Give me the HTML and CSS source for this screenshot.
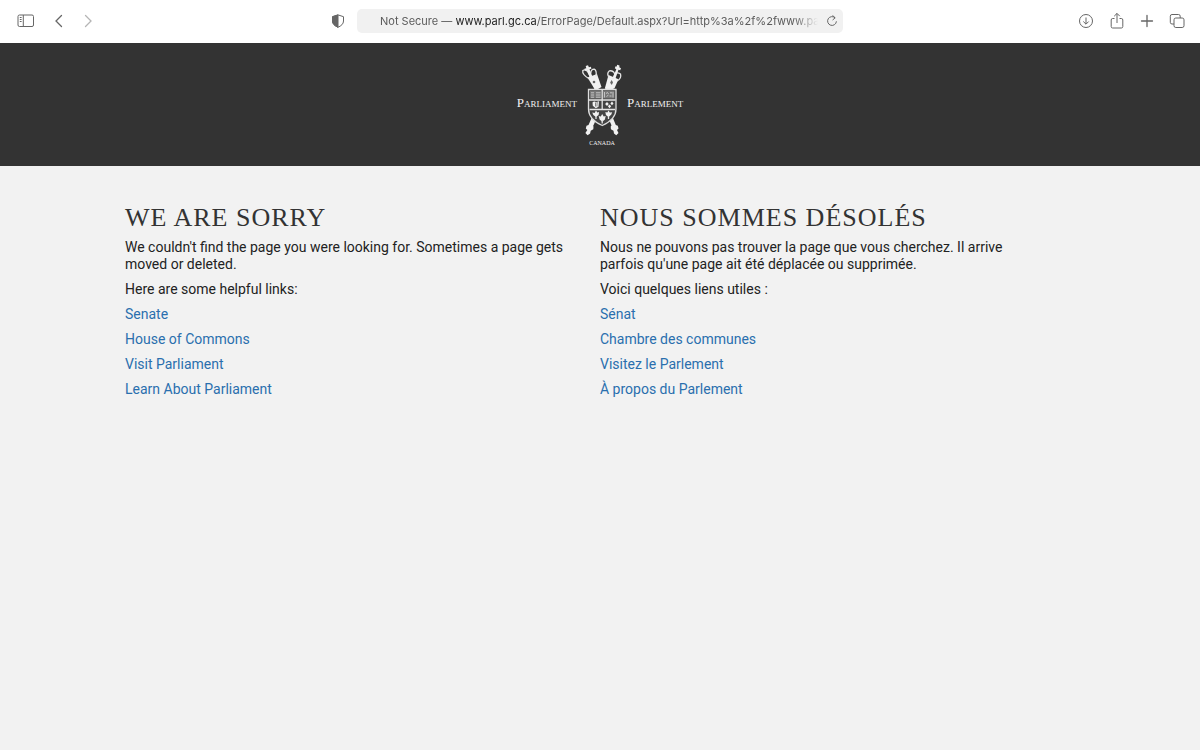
FILE: index.html
```html
<!DOCTYPE html>
<html lang="en">
<head>
    <meta charset="UTF-8">
    <meta name="viewport" content="width=device-width, initial-scale=1.0">
    <title>Parliament of Canada - Parlement du Canada</title>
    <link rel="stylesheet" href="styles.css">
</head>
<body>

    <div class="toolbar">
        <div class="tools tools-left">
            <button type="button" aria-label="Show sidebar">
                <svg width="18" height="14" viewBox="0 0 18 14">
                    <rect x="1" y="1" width="15.5" height="11.5" rx="1.5"/>
                    <path d="M6.3 1v11.5M2.8 3.5h1.8M2.8 5.5h1.8M2.8 7.5h1.8"/>
                </svg>
            </button>
            <button type="button" aria-label="Back">
                <svg width="10" height="14" viewBox="0 0 10 14"><path class="thick" d="M7.5 1.5 2 7l5.5 5.5"/></svg>
            </button>
            <button type="button" aria-label="Forward" disabled>
                <svg width="10" height="14" viewBox="0 0 10 14"><path class="thick" d="M2.5 1.5 8 7l-5.5 5.5"/></svg>
            </button>
        </div>

        <div class="center">
            <button type="button" aria-label="Privacy report">
                <svg width="14" height="14" viewBox="0 0 14 14">
                    <path d="M7 .9 12.5 2.7V7c0 3-2.3 4.800-5.500 6.300C3.800 11.800 1.500 10 1.500 7V2.700z"/>
                    <path class="solid" d="M7 .9v12.400C3.800 11.800 1.500 10 1.500 7V2.700z"/>
                </svg>
            </button>
            <div class="address">
                <div class="url">
                    <label for="url">Not Secure — <b>www.parl.gc.ca</b></label>
                    <input type="text" id="url" value="/ErrorPage/Default.aspx?Url=http%3a%2f%2fwww.parl.gc.ca%2f">
                </div>
                <button type="button" aria-label="Reload">
                    <svg width="12" height="12" viewBox="0 0 12 12"><path d="M9 2.8A4.4 4.4 0 1 0 10.4 6.3M6.5.4 9.2 2.8 6.6 5"/></svg>
                </button>
            </div>
        </div>

        <div class="tools tools-right">
            <button type="button" aria-label="Downloads">
                <svg width="16" height="16" viewBox="0 0 16 16"><circle cx="8" cy="8" r="6.5"/><path d="M8 4.5v6.500M5.3 8.5 8 11.2l2.7-2.7"/></svg>
            </button>
            <button type="button" aria-label="Share">
                <svg width="16" height="18" viewBox="0 0 16 18"><path d="M5.5 6.5H3.6Q2.2 6.5 2.2 8v6.5Q2.2 16 3.6 16h8.8q1.4 0 1.4-1.5V8q0-1.5-1.4-1.5h-1.9M8 11V1.5M5.2 4.2 8 1.4l2.8 2.8"/></svg>
            </button>
            <button type="button" aria-label="New tab">
                <svg width="14" height="14" viewBox="0 0 14 14"><path class="thick" d="M7 1.5v11M1.5 7h11"/></svg>
            </button>
            <button type="button" aria-label="Show all tabs">
                <svg width="16" height="16" viewBox="0 0 16 16"><rect x="5" y="5" width="10" height="9.5" rx="1.8"/><path d="M5 11H3Q1.3 11 1.3 9.3V3.2Q1.3 1.5 3 1.5h6.5q1.7 0 1.7 1.7V5"/></svg>
            </button>
        </div>
    </div>

    <header>
        <div class="logo">
            <span class="word">Parliament</span>
            <div class="emblem">
                <svg width="44" height="74" viewBox="0 0 44 74">
                    <!-- maces crossed behind the shield -->
                    <path class="staff" d="M14 20 35 65M31 20 10 65"/>
                    <path class="fill" d="m7.500 13.500 9.500-3.500 4.500 13-6 3.500z"/>
                    <path class="line" d="M9.500 15Q1.800 10.500 2.800 6.500q3-1.800 5.200 1.700L10.500 13M16 12.500q1-6-1.800-7.300-3.400 0-3.400 4.300"/>
                    <path class="fill" d="M5.700 2 8 1.300l.9 1.900 2-.5.5 2-1.900.6 2.900 7.200-2.600 1L7 6.200l-2 .5-.6-1.900 1.900-.6z"/>
                    <circle class="hole" cx="14" cy="18" r="1.300"/>
                    <path class="fill" d="m28.500 11 10 4.300-4 9-5.200 2.500-4.500-2.300z"/>
                    <path class="line" d="M29.500 14q-3.500-4.200 0-7.200 4.200-.4 5.200 3.300M37 17q4.800-2.500 3.500-7-3.200-2.300-5.700 0L33 15"/>
                    <path class="fill" d="m37 .7 2.500.9-.2 1.700 1.700 1-.8 1.900-1.700-.4L35.300 15l-2.600-1L36.300 5.200l-1.500-1 .8-1.900 1.300.3z"/>
                    <path class="hole" d="m31.500 16 1.500 2.200-1.200 2.800-1.700-2.200z"/>
                    <path class="fill" d="m30 55 2.800-1.200 3 7.200 2 .8.7 2.800-1.500 1.500 1.500 2.800-2.200 2.300-2.300-1.800-.5-2.600-2.600-1.600-.2-2.700 1.200-1.500z"/>
                    <path class="fill" d="m14.500 55-2.800-1.200-3.200 7.200-2 .8-.7 2.800 1.500 1.500-1.900 2.800 2.200 2.300 2.500-1.800.6-2.600 2.600-1.600.2-2.700-1.200-1.500z"/>
                    <!-- shield -->
                    <path class="shield" d="M8.500 25.500h27.500V45c0 8-6 13-13.700 16.500C14.500 58 8.500 53 8.500 45z"/>
                    <path class="quarter" d="M10 27h11.500v7.500H10zM23 27h11.500v7.500H23z"/>
                    <path class="detail" d="M11 28.800h3M16 28.800h4.500M11 31h3M16 31h4.500M11 33.200h3M16 33.200h4.500M24.500 28v5.500M33 28v5.500M26 29.500l1.500-1 1 1.500M29.500 32h2M26.500 32.500l2-1.500M30 28.800h2"/>
                    <path class="line" d="M9 36h26.500M22.200 26v19M9.500 45.500h25.500"/>
                    <path class="fill" d="M12.500 38.500q2-2 3.500-.2l3-1-.5 5.500-2.700 1.500-3-2.500z"/>
                    <path class="hole-line" d="M15.500 38.500v4M17.200 38l-.3 4.500"/>
                    <path class="fill" d="m27 38 1.800 2L27 42l-1.900-2zM32 37.500l1.500 2-1.500 1.700-1.600-1.700zM29.500 40.500l1.700 1.700-1.700 2-1.600-2z"/>
                    <path class="fill" d="m16 46.500 1.300 2.100 1.800-.7-.5 3.200-2.600 2-2.700-2-1-2.500 2.300.3zM28.500 46.500l1.300 2.100 2.400-.3-1 2.500-2.700 2.300-2.600-2-.5-3.200 1.900.7zM22.200 50l1.500 2.500 2-.5-.8 3.400-2.700 2.300-2.600-2.300-.9-3.400 2.100.5z"/>
                    <path class="line" d="M22.200 56v3.500M16 52v3M28.500 52v3"/>
                </svg>
                <span class="country">CANADA</span>
            </div>
            <span class="word">Parlement</span>
        </div>
    </header>

    <main class="container">
        <section lang="en">
            <h1>WE ARE SORRY</h1>
            <p>We couldn't find the page you were looking for. Sometimes a page gets moved or deleted.</p>
            <p>Here are some helpful links:</p>
            <ul>
                <li><a href="#">Senate</a></li>
                <li><a href="#">House of Commons</a></li>
                <li><a href="#">Visit Parliament</a></li>
                <li><a href="#">Learn About Parliament</a></li>
            </ul>
        </section>
        <section lang="fr">
            <h1>NOUS SOMMES DÉSOLÉS</h1>
            <p>Nous ne pouvons pas trouver la page que vous cherchez. Il arrive parfois qu'une page ait été déplacée ou supprimée.</p>
            <p>Voici quelques liens utiles :</p>
            <ul>
                <li><a href="#">Sénat</a></li>
                <li><a href="#">Chambre des communes</a></li>
                <li><a href="#">Visitez le Parlement</a></li>
                <li><a href="#">À propos du Parlement</a></li>
            </ul>
        </section>
    </main>

</body>
</html>
```
FILE: styles.css
```css
* {
    margin: 0;
    padding: 0;
    box-sizing: border-box;
}

body {
    font-family: Roboto, Arial, sans-serif;
    font-size: 14px;
    line-height: 17px;
    background-color: #f2f2f2;
    color: #222;
}

button {
    display: flex;
    border: none;
    background: none;
    color: #666;
    cursor: pointer;
}

button:disabled {
    color: #b5b5b5;
    cursor: default;
}

svg {
    display: block;
    fill: none;
    stroke: currentColor;
}

.thick {
    stroke-width: 1.3;
    stroke-linecap: round;
}

.solid {
    fill: currentColor;
}

/* Browser bar */
.toolbar {
    display: grid;
    grid-template-columns: 1fr auto 1fr;
    align-items: center;
    height: 43px;
    padding: 0 15px 1px 17px;
    background-color: #fff;
}

.tools {
    display: flex;
    align-items: center;
}

.tools-left {
    gap: 19px;
}

.tools-right {
    justify-content: flex-end;
    gap: 15px;
}

.center {
    display: flex;
    align-items: center;
    gap: 12px;
    padding-right: 28px;
}

.address {
    display: flex;
    align-items: center;
    gap: 8px;
    width: 486px;
    height: 24px;
    padding: 0 5px 0 23px;
    border-radius: 5px;
    background-color: #f1f1f1;
}

.url {
    display: flex;
    flex: 1;
    min-width: 0;
    font-family: Inter, sans-serif;
    font-size: 11px;
    color: #5c5c5c;
    -webkit-mask-image: linear-gradient(to left, transparent, #000 24px);
    mask-image: linear-gradient(to left, transparent, #000 24px);
}

.url label {
    white-space: nowrap;
}

.url b {
    font-weight: normal;
    color: #222;
}

.url input {
    flex: 1;
    min-width: 0;
    border: none;
    outline: none;
    background: none;
    font: inherit;
    color: inherit;
}

/* Parliament logo */
header {
    display: flex;
    justify-content: center;
    padding: 21px 0 18px;
    background-color: #333;
    color: #f1f1f1;
}

.logo {
    display: flex;
    align-items: flex-start;
    gap: 3px;
    font-family: "Liberation Serif", serif;
}

.word {
    font-size: 13px;
    font-variant: small-caps;
    line-height: 78px;
}

.emblem {
    display: flex;
    flex-direction: column;
    align-items: center;
}

.emblem svg {
    stroke: none;
}

.country {
    font-size: 6px;
    line-height: 10px;
}

.fill {
    fill: #f1f1f1;
}

.staff {
    stroke: #f1f1f1;
    stroke-width: 3;
}

.line {
    stroke: #e4e4e4;
    stroke-width: 1.3;
}

.hole {
    fill: #666;
}

.hole-line {
    stroke: #555;
    stroke-width: 0.7;
}

.shield {
    fill: #444;
    stroke: #ddd;
    stroke-width: 1.3;
}

.quarter {
    fill: #777;
}

.detail {
    stroke: #ccc;
    stroke-width: 0.9;
}

/* Page content */
.container {
    display: grid;
    grid-template-columns: 1fr 1fr;
    max-width: 950px;
    margin: 0 auto;
    padding-top: 36px;
}

section {
    padding-right: 30px;
}

h1 {
    margin-bottom: 5px;
    font-family: "Liberation Serif", serif;
    font-size: 26px;
    font-weight: normal;
    line-height: 32px;
    letter-spacing: 1px;
    color: #333;
}

p, li {
    margin-bottom: 8px;
}

ul {
    list-style: none;
}

a {
    color: #2a6fae;
    text-decoration: none;
}

a:hover {
    text-decoration: underline;
}
```
